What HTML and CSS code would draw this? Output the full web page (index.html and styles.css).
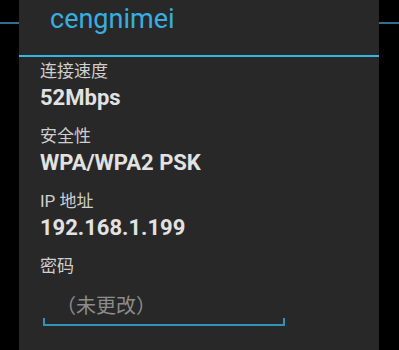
FILE: index.html
```html
<!DOCTYPE html>
<html lang="zh-CN">
<head>
    <meta charset="UTF-8">
    <meta name="viewport" content="width=device-width, initial-scale=1.0">
    <title>cengnimei</title>
    <link rel="stylesheet" href="styles.css">
</head>
<body>
    <div class="dialog">
        <div class="dialog-title">cengnimei</div>

        <div class="dialog-body">
            <div class="info-row">
                <div class="info-label">连接速度</div>
                <div class="info-value">52Mbps</div>
            </div>
            <div class="info-row">
                <div class="info-label">安全性</div>
                <div class="info-value">WPA/WPA2 PSK</div>
            </div>
            <div class="info-row">
                <div class="info-label">IP 地址</div>
                <div class="info-value">192.168.1.199</div>
            </div>
            <div class="info-row">
                <div class="info-label">密码</div>
                <div class="password-field">
                    <div class="password-hint">（未更改）</div>
                    <div class="field-line"></div>
                </div>
            </div>
        </div>
    </div>
</body>
</html>
```

FILE: styles.css
```css
body {
    margin: 0;
    padding: 0;
    height: 350px;
    overflow: hidden;
    background-color: #000;
    /* header line of the screen behind the dialog */
    background-image: linear-gradient(#000 22px, #2f6f8f 22px, #2f6f8f 24px, #000 24px);
    background-repeat: no-repeat;
    font-family: Roboto, "Noto Sans CJK SC", sans-serif;
}

.dialog {
    margin-left: 19px;
    width: 360px;
    height: 350px;
    background-color: #282828;
}

.dialog-title {
    height: 57px;
    padding: 1px 0 0 31px;
    box-sizing: border-box;
    font-size: 27px;
    line-height: 36px;
    color: #38aee0;
    border-bottom: 2px solid #3ab3df;
}

.dialog-body {
    padding: 2px 0 0 21px;
}

.info-row {
    height: 65px;
}

.info-label {
    font-size: 17px;
    line-height: 24px;
    color: #cfcfcf;
}

.info-value {
    font-size: 22px;
    line-height: 30px;
    font-weight: bold;
    color: #e2e2e2;
}

.password-field {
    margin-left: 3px;
    width: 242px;
    margin-top: 15px;
}

.password-hint {
    padding-left: 13px;
    font-size: 20px;
    line-height: 27px;
    color: #8c8c8c;
}

.field-line {
    height: 8px;
    margin-top: -2px;
    border: 2px solid #2f94bd;
    border-top: none;
    box-sizing: border-box;
}
```
